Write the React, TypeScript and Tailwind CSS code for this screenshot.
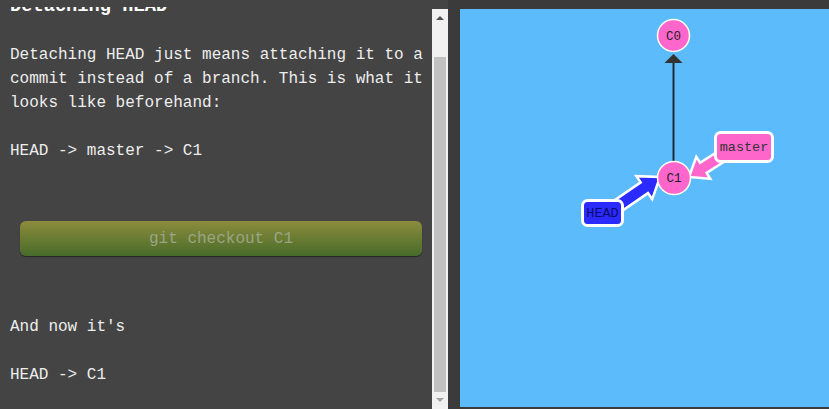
import React from "react";

function arrowPoints(sx: number, sy: number, tx: number, ty: number, w: number, h: number, L: number) {
  const dx = tx - sx;
  const dy = ty - sy;
  const len = Math.hypot(dx, dy);
  const ux = dx / len;
  const uy = dy / len;
  const nx = -uy;
  const ny = ux;
  const bx = tx - ux * L;
  const by = ty - uy * L;
  const pts = [
    [sx + nx * w, sy + ny * w],
    [bx + nx * w, by + ny * w],
    [bx + nx * h, by + ny * h],
    [tx, ty],
    [bx - nx * h, by - ny * h],
    [bx - nx * w, by - ny * w],
    [sx - nx * w, sy - ny * w],
  ];
  return pts.map((p) => `${p[0].toFixed(1)},${p[1].toFixed(1)}`).join(" ");
}

const mono = { fontFamily: '"Liberation Mono", "Courier New", monospace' };

function Graph() {
  return (
    <svg className="block h-full w-full" viewBox="460 9 369 398" preserveAspectRatio="xMinYMin meet">
      {/* edge C1 -> C0 */}
      <line x1="673.5" y1="162" x2="673.5" y2="62" stroke="#1e2a36" strokeWidth="2" />
      <polygon points="673.5,54 664.5,63 682.5,63" fill="#333" />
      {/* C0 */}
      <circle cx="673.5" cy="35.5" r="16" fill="#ff66cc" stroke="#fff" strokeWidth="1.5" />
      <text x="673.5" y="39.5" textAnchor="middle" fontSize="12.5" fill="#222" style={mono}>C0</text>
      {/* master arrow */}
      <polygon
        points={arrowPoints(736, 147, 689, 177, 6, 13, 17)}
        fill="#ff66cc"
        stroke="#fff"
        strokeWidth="2.5"
        strokeLinejoin="miter"
      />
      {/* HEAD arrow */}
      <polygon
        points={arrowPoints(606, 214, 660, 177, 6.5, 14, 19)}
        fill="#2b2bff"
        stroke="#fff"
        strokeWidth="2.5"
        strokeLinejoin="miter"
      />
      {/* C1 */}
      <circle cx="674" cy="178" r="16.5" fill="#ff66cc" stroke="#fff" strokeWidth="1.5" />
      <text x="674" y="182" textAnchor="middle" fontSize="12.5" fill="#222" style={mono}>C1</text>
      {/* master label */}
      <rect x="715.5" y="132.5" width="57" height="29" rx="5" fill="#ff66cc" stroke="#fff" strokeWidth="3" />
      <text x="744" y="151" textAnchor="middle" fontSize="13.5" fill="#333" style={mono}>master</text>
      {/* HEAD label */}
      <rect x="582.5" y="200.5" width="40" height="25" rx="5" fill="#2b2bff" stroke="#fff" strokeWidth="3" />
      <text x="602.5" y="217" textAnchor="middle" fontSize="13.5" fill="#0c0c70" style={mono}>HEAD</text>
    </svg>
  );
}

function Scrollbar() {
  return (
    <div className="mt-[9px] flex w-[16px] flex-col bg-[#f1f1f1]">
      <div className="flex h-[17px] items-center justify-center">
        <div className="h-0 w-0 border-x-[4px] border-b-[4px] border-x-transparent border-b-[#505050]" />
      </div>
      <div className="mx-[2px] mt-[31px] h-[335px] bg-[#c1c1c1]" />
      <div className="flex h-[16px] items-center justify-center">
        <div className="h-0 w-0 border-x-[4px] border-t-[4px] border-x-transparent border-t-[#a3a3a3]" />
      </div>
    </div>
  );
}

export default function App() {
  return (
    <div className="flex h-[409px] w-[829px] overflow-hidden bg-[#3b3b3b]" style={mono}>
      <div className="flex h-full w-[448px] bg-[#444444]">
        <div className="mt-[7px] h-[402px] w-[432px] overflow-hidden text-[16px] leading-[24px] text-[#eeeeee]">
          <h3 className="mt-[-13px] pl-[10px] text-[18.72px] font-bold leading-[24px] text-white">Detaching HEAD</h3>
          <p className="mt-[25px] pl-[10px]">
            Detaching HEAD just means attaching it to a<br />
            commit instead of a branch. This is what it<br />
            looks like beforehand:
          </p>
          <p className="mt-6 pl-[10px]">HEAD -&gt; master -&gt; C1</p>
          <div className="ml-[20px] mt-[58px] flex h-[35px] w-[402px] items-center justify-center rounded-[6px] bg-gradient-to-b from-[#8c8c3c] to-[#476b2a] text-[#9ba585] shadow-[0_1px_1px_rgba(0,0,0,0.45)]">
            git checkout C1
          </div>
          <p className="mt-[59px] pl-[10px]">And now it's</p>
          <p className="mt-6 pl-[10px]">HEAD -&gt; C1</p>
        </div>
        <Scrollbar />
      </div>
      <div className="ml-[12px] mt-[9px] h-[398px] flex-1 bg-[#5cbbfa]">
        <Graph />
      </div>
    </div>
  );
}
